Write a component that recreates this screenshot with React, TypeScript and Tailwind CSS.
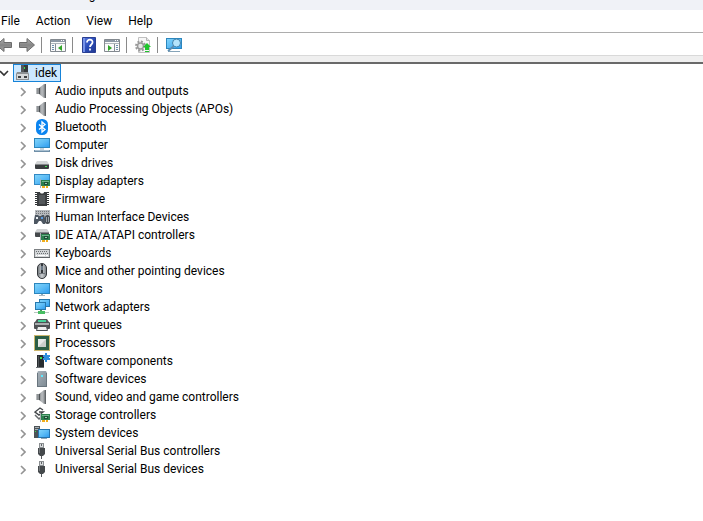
import React, { useState } from "react";

type IconProps = { children: React.ReactNode };

function Icon({ children }: IconProps) {
  return (
    <svg className="size-4 shrink-0" viewBox="0 0 16 16" aria-hidden="true">
      {children}
    </svg>
  );
}

/* Gradients shared by the device icons */
function Gradients() {
  return (
    <svg className="absolute size-0" aria-hidden="true">
      <defs>
        <linearGradient id="screen" x1="0" y1="0" x2="1" y2="1">
          <stop offset="0" stopColor="#7fd3fb" />
          <stop offset="0.5" stopColor="#5cbcf5" />
          <stop offset="1" stopColor="#2f9df0" />
        </linearGradient>
        <linearGradient id="metal" x1="0" y1="0" x2="1" y2="0">
          <stop offset="0" stopColor="#6f7478" />
          <stop offset="0.5" stopColor="#c9cdd0" />
          <stop offset="1" stopColor="#777c80" />
        </linearGradient>
        <linearGradient id="cone" x1="0" y1="0" x2="1" y2="0">
          <stop offset="0" stopColor="#7d8184" />
          <stop offset="0.5" stopColor="#b9bcbf" />
          <stop offset="1" stopColor="#8b8f92" />
        </linearGradient>
        <linearGradient id="arrow" x1="0" y1="0" x2="0" y2="1">
          <stop offset="0" stopColor="#b5b5b5" />
          <stop offset="0.5" stopColor="#858585" />
          <stop offset="1" stopColor="#a8a8a8" />
        </linearGradient>
        <linearGradient id="help" x1="0" y1="0" x2="1" y2="1">
          <stop offset="0" stopColor="#5b7be0" />
          <stop offset="0.5" stopColor="#2b4cb8" />
          <stop offset="1" stopColor="#22398f" />
        </linearGradient>
        <linearGradient id="server" x1="0" y1="0" x2="1" y2="1">
          <stop offset="0" stopColor="#a9b3bb" />
          <stop offset="1" stopColor="#7e8a93" />
        </linearGradient>
      </defs>
    </svg>
  );
}

function Card() {
  return (
    <g>
      <path d="M6 6h1v9H6z" fill="#a9b0b3" />
      <path d="M7 7h9v6H7z" fill="#2b7f4d" />
      <path d="M8 8h7v1H8z" fill="#6fb58a" />
      <path d="M10 9h4v3h-4z" fill="#1d4f36" />
      <path d="M11 10h2v1h-2z" fill="#9cc9b0" />
      <path d="M8 13h3v2H8zM12 13h2v2h-2z" fill="#f0ad1c" />
    </g>
  );
}

function Speaker() {
  return (
    <Icon>
      <path d="M2 5h3v6H2z" fill="#8f9396" />
      <path d="M2 5h1v6H2z" fill="#b9bcbe" />
      <path d="M5 5l5-4h1v14h-1l-5-4z" fill="url(#cone)" />
      <path d="M5 5h1v6H5z" fill="#4c5053" />
      <path d="M11 1h1v14h-1z" fill="#606467" />
      <path d="M10 2h1v12h-1z" fill="#84888b" />
    </Icon>
  );
}

function Bluetooth() {
  return (
    <Icon>
      <rect x="2" y="0" width="12" height="16" rx="5.5" fill="#0a84f0" />
      <path d="M5 5.5l6 5L8 13V3l3 2.5-6 5" fill="none" stroke="#fff" strokeWidth="1.3" />
    </Icon>
  );
}

function Computer() {
  return (
    <Icon>
      <path d="M0 1h16v10H0z" fill="#2c86bd" />
      <path d="M1 2h14v8H1z" fill="url(#screen)" />
      <path d="M6 11h4v2H6z" fill="#c5d3dc" />
      <path d="M0 13h16v2H0z" fill="#6f8fa8" />
      <path d="M1 13h14v1H1z" fill="#a9c0d1" />
    </Icon>
  );
}

function Disk() {
  return (
    <Icon>
      <path d="M3 6h10l2 3H1z" fill="#d4d6d7" />
      <rect x="1" y="9" width="14" height="5" rx="1" fill="#3a3d3f" />
      <path d="M1 9h14v1H1z" fill="#85898b" />
      <path d="M11 11h2v1h-2z" fill="#43dd55" />
    </Icon>
  );
}

function Display() {
  return (
    <Icon>
      <path d="M0 1h16v11H0z" fill="#3289c4" />
      <path d="M1 2h14v9H1z" fill="url(#screen)" />
      <Card />
    </Icon>
  );
}

function Firmware() {
  return (
    <Icon>
      <path d="M3 1h3c0 2 4 2 4 0h3v14H3z" fill="#3b3e40" />
      <path d="M5 4h6v9H5z" fill="#54585b" />
      <path
        d="M1 1.5h2M1 3.5h2M1 5.5h2M1 7.5h2M1 9.5h2M1 11.5h2M1 13.5h2M13 1.5h2M13 3.5h2M13 5.5h2M13 7.5h2M13 9.5h2M13 11.5h2M13 13.5h2"
        stroke="#303335"
      />
    </Icon>
  );
}

function Hid() {
  return (
    <Icon>
      <path d="M1 1h15v7H1z" fill="#b7babd" />
      <path d="M2 2.5h13M2 4.5h13" stroke="#75797d" strokeDasharray="1 1" />
      <path d="M1 6h3l1 1h2l1-1h2l2 6-1 3H9l-2-3H5l-2 3H0v-4z" fill="#4d5762" />
      <path d="M2 8h2v2H2z" fill="#e9eef3" />
      <path d="M7 8h2v2H7z" fill="#5b9be0" />
      <rect x="11" y="6" width="5" height="9" rx="2.5" fill="#454b51" />
      <path d="M12.5 8v5M14.5 8v5" stroke="#9aa2a9" />
    </Icon>
  );
}

function Ide() {
  return (
    <Icon>
      <path d="M3 2h10l2 3H1z" fill="#cfd1d2" />
      <rect x="1" y="5" width="14" height="5" rx="1" fill="#45494b" />
      <path d="M1 5h14v1H1z" fill="#85898c" />
      <Card />
    </Icon>
  );
}

function Keyboard() {
  return (
    <Icon>
      <path d="M0 4h16v9H0z" fill="#7c8083" />
      <path d="M1 5h14v7H1z" fill="#d3d6d8" />
      <path d="M2 6.5h12M3 8.5h11" stroke="#6b6f72" strokeDasharray="1 1" />
      <path d="M2 10.5h1M4 10.5h7M12 10.5h2" stroke="#fff" />
      <path d="M0 12h16v1H0z" fill="#5f6366" />
    </Icon>
  );
}

function Mouse() {
  return (
    <Icon>
      <rect x="3.5" y="0.5" width="9" height="15" rx="4.5" fill="url(#metal)" stroke="#33373b" />
      <path d="M7 1h2v9H7z" fill="#34383c" />
      <path d="M7.5 3h1v4h-1z" fill="#a3bdd7" />
      <path d="M5 10.5h6" stroke="#70757a" />
    </Icon>
  );
}

function MonitorIcon() {
  return (
    <Icon>
      <path d="M0 2h16v11H0z" fill="#2c86bd" />
      <path d="M1 3h14v9H1z" fill="url(#screen)" />
      <path d="M7 13h2v1H7z" fill="#91a7b5" />
      <path d="M5 14h6v1H5z" fill="#aebac2" />
    </Icon>
  );
}

function Network() {
  return (
    <Icon>
      <path d="M5 0h11v8H5z" fill="#2779ae" />
      <path d="M6 1h9v6H6z" fill="url(#screen)" />
      <path d="M1 3h11v8H1z" fill="#2779ae" />
      <path d="M2 4h9v6H2z" fill="url(#screen)" />
      <path d="M6 11h2v2H6z" fill="#4a9d5e" />
      <path d="M0 13h15v1H0z" fill="#b9c6c0" />
      <path d="M4 12h7v3H4z" fill="#47bd62" />
    </Icon>
  );
}

function Printer() {
  return (
    <Icon>
      <path d="M3 2h10l2 3H1z" fill="#55595c" />
      <path d="M4 3h8v2H4z" fill="#47d39b" />
      <rect x="0" y="5" width="16" height="7" rx="1" fill="#4d5154" />
      <path d="M1 6h14v2H1z" fill="#a9adaf" />
      <path d="M3.5 9.5h9l1 4h-11z" fill="#eceded" stroke="#494d50" />
    </Icon>
  );
}

function Processor() {
  return (
    <Icon>
      <path d="M0 0h16v16H0z" fill="#f2e3a8" />
      <path d="M.5.5h15v15H.5z" fill="none" stroke="#a58a32" strokeDasharray="1 1" />
      <path d="M1 1h14v14H1z" fill="#2b5e45" />
      <path d="M4 4h8v8H4z" fill="#e6e9e8" />
      <path d="M4 12l8-8v8z" fill="#c9cecb" />
    </Icon>
  );
}

function Component() {
  return (
    <Icon>
      <path d="M3 2h7v13H3z" fill="#292d30" />
      <path d="M4 3h1v11H4z" fill="#4f5458" />
      <path d="M6 4h2v2H6z" fill="#35e252" />
      <path d="M2 14h8v1H2z" fill="#6a6f73" />
      <path d="M9 2h2V0h2v2h3v2h-1v1h1v2h-3v2h-2V7H9V5h1V4H9z" fill="#2f8fdc" />
    </Icon>
  );
}

function SoftwareDevice() {
  return (
    <Icon>
      <path d="M4 0h8l1 2v13H3V2z" fill="url(#server)" />
      <path d="M3 15.5h10M3.5 2v13M12.5 2v13" stroke="#69757e" />
      <path d="M7 4h2v2H7z" fill="#5deaff" />
    </Icon>
  );
}

function Storage() {
  return (
    <Icon>
      <path d="M9 3L6 1 1 5l4 3 4-3H5" fill="none" stroke="#44484b" strokeWidth="1.4" />
      <path d="M1 8l4 4 2-2" fill="none" stroke="#65696c" strokeWidth="1.5" />
      <Card />
    </Icon>
  );
}

function System() {
  return (
    <Icon>
      <path d="M0 1h6v12H0z" fill="#4d5357" />
      <path d="M1 2.5h4M1 4.5h4" stroke="#a9b0b4" />
      <path d="M1 6h1v1H1z" fill="#35e252" />
      <path d="M4 4h12v9H4z" fill="#2473ad" />
      <path d="M5 5h10v7H5z" fill="url(#screen)" />
      <path d="M7 13h6v1H7z" fill="#91a7b5" />
    </Icon>
  );
}

function Usb() {
  return (
    <Icon>
      <path d="M5 0h5v5H5z" fill="#8a8e91" />
      <path d="M6 1h3v3H6z" fill="#dadddf" />
      <path d="M7 1h1v2H7z" fill="#606467" />
      <path d="M4 5h7v6l-2 2H6l-2-2z" fill="#45494c" />
      <path d="M5 5h1v5H5z" fill="#74787b" />
      <path d="M7 13h1v3H7z" fill="#55595c" />
    </Icon>
  );
}

function Root() {
  return (
    <Icon>
      <path d="M6 0h7v9H6z" fill="#54585b" />
      <path d="M9 0h4v8H9z" fill="#36393b" />
      <path d="M9 2h1v2H9z" fill="#35e252" />
      <path d="M2 7h11l1 2v6H1V9z" fill="#8c9093" />
      <path d="M2 9h11v5H2z" fill="#d7d9da" />
      <path d="M3 11h3v2H3zM9 11h3v2H9z" fill="#3d4042" />
    </Icon>
  );
}

function Arrow({ back = false }: { back?: boolean }) {
  return (
    <Icon>
      <path
        d={back ? "M.5 8L8 1.5v4h7.5v5H8v4z" : "M15.5 8L8 1.5v4H.5v5H8v4z"}
        fill="url(#arrow)"
        stroke="#6c6c6c"
      />
    </Icon>
  );
}

function Pane({ right = false }: { right?: boolean }) {
  return (
    <Icon>
      <path d="M.5 2.5h15v12H.5z" fill="#fafafa" stroke="#83898f" />
      <path d="M1 3h14v2H1z" fill="#8d98a5" />
      <path d="M11 3.5h1M13 3.5h1" stroke="#fff" />
      <path d="M1 6.5h14" stroke="#aeb5bc" />
      <path d={right ? "M10.5 7v7" : "M5.5 7v7"} stroke="#838c95" />
      <path
        d={right ? "M12 8.5h2M12 10.5h2M12 12.5h2" : "M2 8.5h2M2 10.5h2M2 12.5h2"}
        stroke="#6e8faf"
      />
      <path d={right ? "M4 8v6l4-3z" : "M12 8v6l-4-3z"} fill="#31a52a" />
    </Icon>
  );
}

function Help() {
  return (
    <Icon>
      <path d="M1.5.5h13v15h-13z" fill="url(#help)" stroke="#2a3f93" />
      <path d="M2 1h2v14H2z" fill="#7793e8" />
      <path
        d="M6 5.500c0-4 6-3.500 5.500 0C11.500 7.500 9 7.500 9 10M9 11.500v2"
        fill="none"
        stroke="#fff"
        strokeWidth="1.8"
      />
    </Icon>
  );
}

function Scan() {
  return (
    <Icon>
      <path d="M3.5.5h8l3 3v12h-11z" fill="#f7f7f7" stroke="#c0c0c0" />
      <path d="M11.5.5v3h3" fill="#e4e4e4" stroke="#b5b5b5" />
      <circle cx="5.5" cy="9" r="4.5" fill="none" stroke="#9a9a9a" strokeWidth="2" strokeDasharray="2 1.5" />
      <circle cx="5.5" cy="9" r="3" fill="#e8e8e8" stroke="#9a9a9a" strokeWidth="1.5" />
      <path d="M12 6l4 4h-2v3h-4v-3H8z" fill="#20c52d" />
      <path d="M10 14h4v1h-4z" fill="#20c52d" />
    </Icon>
  );
}

function FindMonitor() {
  return (
    <Icon>
      <path d="M0 1h16v11H0z" fill="#2c86bd" />
      <path d="M1 2h14v9H1z" fill="url(#screen)" />
      <path d="M2 14h12v1H2z" fill="#86a4b8" />
      <path d="M8 9l-6 5" stroke="#5d8db0" strokeWidth="2" />
      <circle cx="10.5" cy="6" r="4" fill="#b4e3fb" stroke="#4382ab" />
    </Icon>
  );
}

const menus = ["File", "Action", "View", "Help"];

const toolbar = [
  [
    { label: "Back", icon: <Arrow back /> },
    { label: "Forward", icon: <Arrow /> },
  ],
  [{ label: "Show/Hide Console Tree", icon: <Pane /> }],
  [
    { label: "Help", icon: <Help /> },
    { label: "Show/Hide Action Pane", icon: <Pane right /> },
  ],
  [{ label: "Scan for hardware changes", icon: <Scan /> }],
  [{ label: "Add drivers", icon: <FindMonitor /> }],
];

const devices = [
  { name: "Audio inputs and outputs", icon: <Speaker /> },
  { name: "Audio Processing Objects (APOs)", icon: <Speaker /> },
  { name: "Bluetooth", icon: <Bluetooth /> },
  { name: "Computer", icon: <Computer /> },
  { name: "Disk drives", icon: <Disk /> },
  { name: "Display adapters", icon: <Display /> },
  { name: "Firmware", icon: <Firmware /> },
  { name: "Human Interface Devices", icon: <Hid /> },
  { name: "IDE ATA/ATAPI controllers", icon: <Ide /> },
  { name: "Keyboards", icon: <Keyboard /> },
  { name: "Mice and other pointing devices", icon: <Mouse /> },
  { name: "Monitors", icon: <MonitorIcon /> },
  { name: "Network adapters", icon: <Network /> },
  { name: "Print queues", icon: <Printer /> },
  { name: "Processors", icon: <Processor /> },
  { name: "Software components", icon: <Component /> },
  { name: "Software devices", icon: <SoftwareDevice /> },
  { name: "Sound, video and game controllers", icon: <Speaker /> },
  { name: "Storage controllers", icon: <Storage /> },
  { name: "System devices", icon: <System /> },
  { name: "Universal Serial Bus controllers", icon: <Usb /> },
  { name: "Universal Serial Bus devices", icon: <Usb /> },
];

function App() {
  const [open, setOpen] = useState(true);

  return (
    <div className="min-h-screen overflow-hidden bg-white font-[Roboto,'Open_Sans',sans-serif] text-[12px] leading-[18px] text-black">
      <Gradients />

      {/* Title bar */}
      <header className="flex h-2.5 items-end gap-2 overflow-hidden bg-[#f0f2f7] pb-1.5">
        <div className="mb-1 h-3 w-3 shrink-0 border border-[#8f9397] bg-[#d5d7d9]" />
        <h1>Device Manager</h1>
      </header>

      <nav className="flex h-[22px] items-center gap-4 pl-px">
        {menus.map((m) => (
          <button key={m}>{m}</button>
        ))}
      </nav>

      {/* Toolbar */}
      <div className="flex h-6 items-center overflow-hidden border-y border-t-[#adadad] border-b-[#d9d9d9] pt-0.5">
        {toolbar.map((group, i) => (
          <div
            key={i}
            className="flex items-center gap-[7px] border-l border-[#8a8a8a] pr-1.5 pl-2 first:-ml-1 first:border-l-0 first:pl-0"
          >
            {group.map((item) => (
              <button key={item.label} aria-label={item.label} title={item.label}>
                {item.icon}
              </button>
            ))}
          </div>
        ))}
      </div>
      <div className="h-2 border-b-2 border-[#696969] bg-[#efefef]" />

      {/* Device tree */}
      <main>
        <button
          className="flex h-[18px] items-center gap-1"
          aria-expanded={open}
          onClick={() => setOpen(!open)}
        >
          <svg className="h-2 w-[9px]" viewBox="0 0 9 8" aria-hidden="true">
            <path d="M0 2l4 4 4-4" fill="none" stroke="#333" strokeWidth="1.6" />
          </svg>
          <span className="flex h-[18px] items-center gap-1 border border-[#1683d8] bg-[#cce8ff] pr-[3px] pl-px">
            <Root />
            idek
          </span>
        </button>

        {open && (
          <ul>
            {devices.map((d) => (
              <li key={d.name}>
                <button className="flex h-[18px] items-center pl-5" aria-expanded={false}>
                  <svg className="mt-0.5 mr-2 h-2.5 w-1.5" viewBox="0 0 6 10" aria-hidden="true">
                    <path d="M1 1l4 4-4 4" fill="none" stroke="#949494" strokeWidth="1.6" />
                  </svg>
                  {d.icon}
                  <span className="ml-[5px] whitespace-nowrap">{d.name}</span>
                </button>
              </li>
            ))}
          </ul>
        )}
      </main>
    </div>
  );
}

export default App;
